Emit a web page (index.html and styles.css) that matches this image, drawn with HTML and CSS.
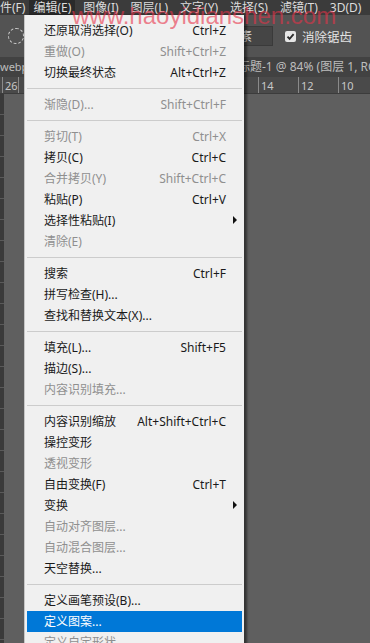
FILE: index.html
```html
<!DOCTYPE html>
<html>
<head>
    <meta charset="UTF-8">
    <title>编辑菜单</title>
    <link rel="stylesheet" href="styles.css">
</head>
<body>
    <div class="menubar">
        <span class="top-item first">件(F)</span>
        <span class="top-item active">编辑(E)</span>
        <span class="top-item">图像(I)</span>
        <span class="top-item">图层(L)</span>
        <span class="top-item">文字(Y)</span>
        <span class="top-item">选择(S)</span>
        <span class="top-item">滤镜(T)</span>
        <span class="top-item">3D(D)</span>
        <span class="top-item">视图(V)</span>
    </div>

    <div class="options-bar">
        <span class="marquee-icon"></span>
        <span class="spacer"></span>
        <span class="unit-box">素</span>
        <span class="checkbox">
            <svg width="11" height="11" viewBox="0 0 11 11"><path d="M2.5 5.6 L4.6 7.8 L8.6 3.2" fill="none" stroke="#2a2a2a" stroke-width="1.8"/></svg>
        </span>
        <span class="option-label">消除锯齿</span>
    </div>

    <div class="tab-bar">
        <span class="tab first-tab">webp</span>
        <span class="tab doc-tab">未标题-1 @ 84% (图层 1, RGB/8#)</span>
    </div>

    <div class="ruler">
        <span class="ruler-cell first-cell">26</span>
        <span class="ruler-cell"></span>
        <span class="ruler-cell"></span>
        <span class="ruler-cell"></span>
        <span class="ruler-cell"></span>
        <span class="ruler-cell"></span>
        <span class="ruler-cell">16</span>
        <span class="ruler-cell">14</span>
        <span class="ruler-cell">12</span>
        <span class="ruler-cell">10</span>
    </div>

    <div class="workspace">
        <div class="v-ruler"></div>
        <div class="canvas"></div>
    </div>

    <div class="watermark">www.haoyidianshen.com</div>

    <div class="dropdown">
        <div class="item"><span>还原取消选择(O)</span><span class="key">Ctrl+Z</span></div>
        <div class="item off"><span>重做(O)</span><span class="key">Shift+Ctrl+Z</span></div>
        <div class="item"><span>切换最终状态</span><span class="key">Alt+Ctrl+Z</span></div>
        <div class="sep"></div>
        <div class="item off"><span>渐隐(D)...</span><span class="key">Shift+Ctrl+F</span></div>
        <div class="sep"></div>
        <div class="item off"><span>剪切(T)</span><span class="key">Ctrl+X</span></div>
        <div class="item"><span>拷贝(C)</span><span class="key">Ctrl+C</span></div>
        <div class="item off"><span>合并拷贝(Y)</span><span class="key">Shift+Ctrl+C</span></div>
        <div class="item"><span>粘贴(P)</span><span class="key">Ctrl+V</span></div>
        <div class="item sub"><span>选择性粘贴(I)</span><span class="key"></span><span class="arrow"></span></div>
        <div class="item off"><span>清除(E)</span><span class="key"></span></div>
        <div class="sep"></div>
        <div class="item"><span>搜索</span><span class="key">Ctrl+F</span></div>
        <div class="item"><span>拼写检查(H)...</span><span class="key"></span></div>
        <div class="item"><span>查找和替换文本(X)...</span><span class="key"></span></div>
        <div class="sep"></div>
        <div class="item"><span>填充(L)...</span><span class="key">Shift+F5</span></div>
        <div class="item"><span>描边(S)...</span><span class="key"></span></div>
        <div class="item off"><span>内容识别填充...</span><span class="key"></span></div>
        <div class="sep"></div>
        <div class="item"><span>内容识别缩放</span><span class="key">Alt+Shift+Ctrl+C</span></div>
        <div class="item"><span>操控变形</span><span class="key"></span></div>
        <div class="item off"><span>透视变形</span><span class="key"></span></div>
        <div class="item"><span>自由变换(F)</span><span class="key">Ctrl+T</span></div>
        <div class="item sub"><span>变换</span><span class="key"></span><span class="arrow"></span></div>
        <div class="item off"><span>自动对齐图层...</span><span class="key"></span></div>
        <div class="item off"><span>自动混合图层...</span><span class="key"></span></div>
        <div class="item"><span>天空替换...</span><span class="key"></span></div>
        <div class="sep"></div>
        <div class="item"><span>定义画笔预设(B)...</span><span class="key"></span></div>
        <div class="item selected"><span>定义图案...</span><span class="key"></span></div>
        <div class="item off"><span>定义自定形状...</span><span class="key"></span></div>
    </div>
</body>
</html>
```

FILE: styles.css
```css
html, body {
    margin: 0;
    padding: 0;
}
body {
    width: 370px;
    height: 643px;
    overflow: hidden;
    position: relative;
    background: #5f5f5f;
    font-family: "Noto Sans", "Noto Sans CJK SC", sans-serif;
    font-size: 12px;
}
.menubar {
    height: 15px;
    background: #3b3b3b;
    display: flex;
    align-items: center;
    color: #dcdcdc;
    white-space: nowrap;
    overflow: hidden;
}
.top-item {
    flex: none;
    padding: 0 4px;
    margin-right: 4px;
    line-height: 15px;
}
.top-item.first {
    padding: 0;
    margin-right: 4px;
}
.top-item.active {
    background: #2a2a2a;
}
.options-bar {
    height: 42px;
    background: #535353;
    display: flex;
    align-items: center;
    color: #e2e2e2;
    white-space: nowrap;
    overflow: hidden;
}
.marquee-icon {
    flex: none;
    width: 14px;
    height: 14px;
    margin-left: 8px;
    border: 1px dashed #cfcfcf;
    border-radius: 50%;
}
.spacer {
    flex: none;
    width: 211px;
}
.unit-box {
    flex: none;
    width: 38px;
    height: 20px;
    line-height: 20px;
    padding-left: 4px;
    box-sizing: border-box;
    background: #454545;
    border: 1px solid #3a3a3a;
    color: #e0e0e0;
}
.checkbox {
    flex: none;
    width: 11px;
    height: 11px;
    margin-left: 12px;
    background: #e6e6e6;
    border-radius: 2px;
    display: flex;
}
.option-label {
    flex: none;
    margin-left: 6px;
    font-size: 12.5px;
}
.tab-bar {
    height: 20px;
    background: #424242;
    display: flex;
    align-items: center;
    color: #bdbdbd;
    white-space: nowrap;
    overflow: hidden;
}
.tab {
    flex: none;
    line-height: 20px;
}
.first-tab {
    width: 226px;
    font-size: 11px;
}
.ruler {
    height: 16px;
    background: #4a4a4a;
    border-bottom: 1px solid #3c3c3c;
    display: flex;
    padding-left: 2px;
    white-space: nowrap;
    overflow: hidden;
    color: #c8c8c8;
    font-size: 11px;
    line-height: 17px;
}
.ruler-cell {
    flex: none;
    width: 40px;
    box-sizing: border-box;
    border-left: 1px solid #8a8a8a;
    padding-left: 2px;
}
.ruler-cell.first-cell {
    width: 16px;
}
.workspace {
    display: flex;
    height: 550px;
}
.v-ruler {
    width: 4px;
    background: repeating-linear-gradient(#3a3a3a 0 20px, #5a5a5a 20px 21px);
}
.canvas {
    flex: 1;
    background: #5f5f5f;
}
.watermark {
    position: absolute;
    left: 72px;
    top: 2px;
    font-family: "Liberation Sans", Arial, sans-serif;
    font-size: 24px;
    color: rgba(232, 50, 72, 0.6);
    z-index: 2;
    pointer-events: none;
}
.dropdown {
    position: absolute;
    left: 24px;
    top: 15px;
    width: 220px;
    height: 640px;
    box-sizing: border-box;
    padding: 5px 2px 0 2px;
    background: #f0f0f0;
    border-left: 1px solid #c6c6c6;
    box-shadow: 3px 0 2px rgba(0, 0, 0, 0.45);
    color: #1a1a1a;
}
.item {
    display: grid;
    grid-template-columns: 1fr auto 16px;
    height: 21px;
    line-height: 21px;
    padding-left: 17px;
    white-space: nowrap;
}
.item.off {
    color: #8f8f8f;
}
.item.selected {
    background: #0078d7;
    color: #ffffff;
}
.key {
    text-align: right;
}
.arrow {
    width: 0;
    height: 0;
    margin: 6px 0 0 7px;
    border-left: 4px solid #111;
    border-top: 4px solid transparent;
    border-bottom: 4px solid transparent;
}
.sep {
    height: 1px;
    margin: 5px 0;
    background: #cccccc;
}
```
